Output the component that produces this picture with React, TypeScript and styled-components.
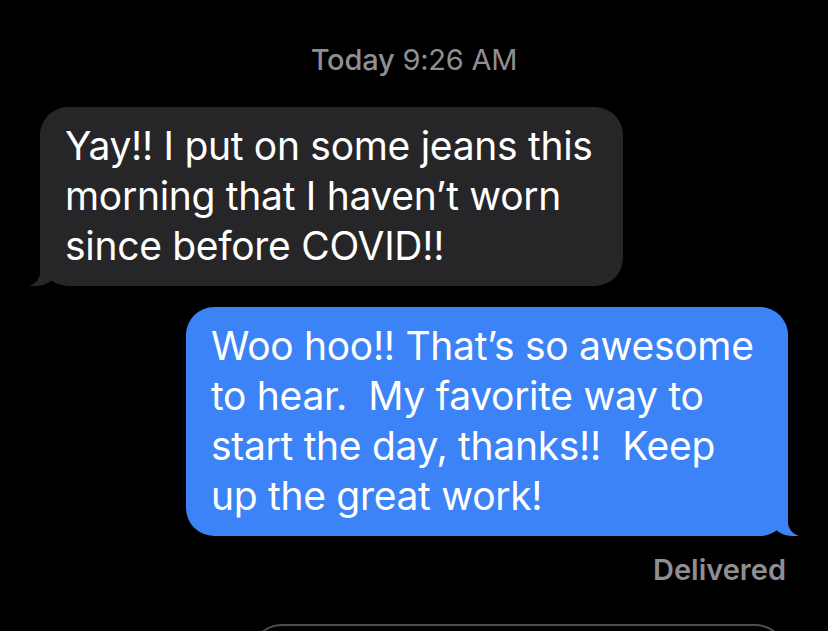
import React from 'react';
import styled, { createGlobalStyle } from 'styled-components';

const GlobalStyle = createGlobalStyle`
  html, body {
    margin: 0;
    padding: 0;
    background: #000;
    overflow: hidden;
  }
`;

type Side = 'left' | 'right';

const messages: { side: Side; width: number; lines: string[] }[] = [
  {
    side: 'left',
    width: 583,
    lines: ['Yay!! I put on some jeans this', 'morning that I haven’t worn', 'since before COVID!!'],
  },
  {
    side: 'right',
    width: 602,
    lines: [
      'Woo hoo!! That’s so awesome',
      'to hear.  My favorite way to',
      'start the day, thanks!!  Keep',
      'up the great work!',
    ],
  },
];

const App: React.FC = () => {
  return (
    <Page>
      <GlobalStyle />
      <Stamp>
        <b>Today</b> 9:26 AM
      </Stamp>
      <Thread>
        {messages.map((m, i) => (
          <Bubble key={i} side={m.side} style={{ width: m.width }}>
            {m.lines.map((l, j) => (
              <Line key={j}>{l}</Line>
            ))}
          </Bubble>
        ))}
      </Thread>
      <Status>Delivered</Status>
      <InputBar />
    </Page>
  );
};

export default App;

const Page = styled.div`
  height: 631px;
  overflow: hidden;
  background: #000;
  font-family: Inter, 'Noto Sans', sans-serif;
  display: flex;
  flex-direction: column;
  padding-top: 44px;
  box-sizing: border-box;
`;

const Stamp = styled.div`
  text-align: center;
  color: #8e8e93;
  font-size: 29px;
  line-height: 32px;
  letter-spacing: -0.2px;

  b {
    font-weight: 500;
  }
`;

const Thread = styled.div`
  display: flex;
  flex-direction: column;
  gap: 21px;
  margin-top: 31px;
  padding: 0 40px;
`;

const Bubble = styled.div<{ side: Side }>`
  position: relative;
  box-sizing: border-box;
  align-self: ${(p) => (p.side === 'left' ? 'flex-start' : 'flex-end')};
  background: ${(p) => (p.side === 'left' ? '#262628' : '#3b83f6')};
  color: #fff;
  border-radius: 28px;
  padding: 14px 25px 15px;
  font-size: 39px;
  line-height: 50px;
  letter-spacing: -0.3px;

  &::before {
    content: '';
    position: absolute;
    bottom: 0;
    ${(p) => (p.side === 'left' ? 'left: -10px;' : 'right: -10px;')}
    width: 30px;
    height: 30px;
    background: ${(p) => (p.side === 'left' ? '#262628' : '#3b83f6')};
    ${(p) =>
      p.side === 'left'
        ? 'border-bottom-right-radius: 24px;'
        : 'border-bottom-left-radius: 24px;'}
  }

  &::after {
    content: '';
    position: absolute;
    bottom: 0;
    ${(p) => (p.side === 'left' ? 'left: -30px;' : 'right: -30px;')}
    width: 30px;
    height: 30px;
    background: #000;
    ${(p) =>
      p.side === 'left'
        ? 'border-bottom-right-radius: 14px;'
        : 'border-bottom-left-radius: 14px;'}
  }
`;

const Line = styled.div`
  white-space: pre;
  position: relative;
  z-index: 1;
`;

const Status = styled.div`
  align-self: flex-end;
  margin-right: 42px;
  margin-top: 18px;
  color: #8e8e93;
  font-size: 29px;
  font-weight: 600;
  line-height: 32px;
`;

const InputBar = styled.div`
  margin: 38px 41px 0 250px;
  height: 64px;
  flex-shrink: 0;
  border: 2px solid #4d4d50;
  border-radius: 32px;
`;
